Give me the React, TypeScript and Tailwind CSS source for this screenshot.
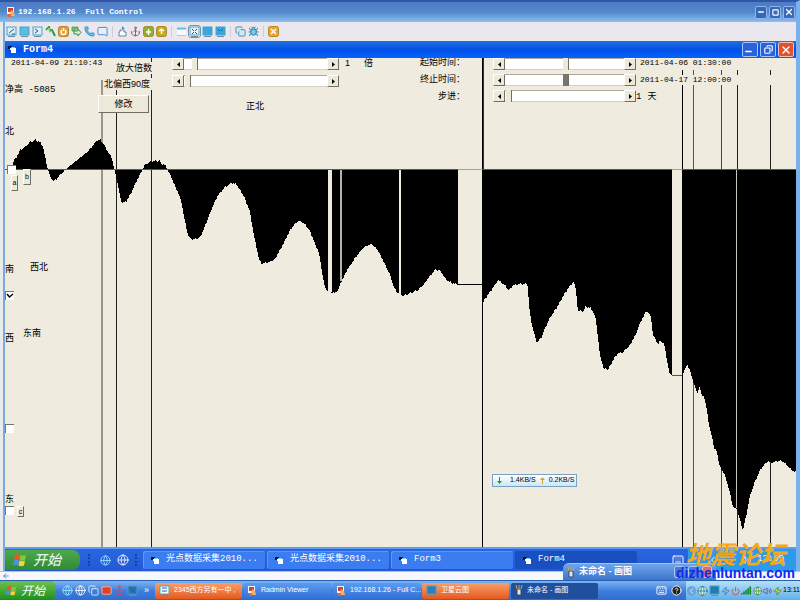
import React from "react";
import {
  Anchor, ArrowLeft, Bug, Copy, Globe, HelpCircle, Keyboard, Mail, MessageSquare, Minus,
  Phone, Power, Signal, Square, Volume2, X, Zap, ChevronLeft,
} from "lucide-react";

const CJK = "font-['Liberation_Sans','Noto_Sans_CJK_SC',sans-serif]";
const MONO = "font-['Liberation_Mono','Noto_Sans_CJK_SC',monospace]";

/* Tilt curve: [x, y] in form units, baseline at y = 169 */
const curve: [number, number][] = [
  [13, 162], [17, 156], [20, 150], [24, 148], [30, 142], [36, 140], [40, 142], [43, 146], [45, 156], [47, 166],
  [50, 176], [53, 181], [56, 180], [60, 175], [66, 169], [72, 164], [85, 154], [92, 147], [97, 140], [101, 140],
  [106, 148], [112, 158], [114, 168], [117, 180], [120, 196], [122, 203], [126, 202], [130, 195], [135, 184],
  [142, 170], [145, 165], [150, 162], [158, 161], [159, 159], [161, 163], [166, 166], [170, 174], [176, 188],
  [181, 200], [184, 216], [188, 235], [191, 239], [196, 239], [200, 237], [204, 228], [210, 213], [217, 197],
  [224, 188], [231, 183], [236, 184], [243, 194], [250, 212], [254, 235], [259, 259], [262, 264], [270, 262],
  [275, 259], [280, 250], [285, 240], [290, 230], [297, 222], [300, 221], [305, 224], [310, 231], [315, 244],
  [319, 252], [322, 272], [325, 288], [329, 292], [335, 293], [338, 290], [341, 282], [347, 270], [355, 258],
  [362, 249], [368, 245], [372, 244], [378, 250], [384, 262], [390, 275], [394, 287], [398, 293], [403, 296],
  [411, 293], [418, 290], [424, 284], [430, 276], [435, 270], [440, 270], [443, 275], [448, 281], [455, 284],
  [482, 284], [483, 302], [490, 292], [498, 280], [505, 285], [509, 290], [513, 285], [520, 284], [527, 284],
  [528, 287], [529, 305], [531, 320], [534, 333], [537, 343], [541, 338], [546, 326], [549, 319], [556, 309],
  [563, 296], [570, 286], [574, 281], [576, 290], [578, 311], [584, 311], [585, 307], [591, 308], [593, 311],
  [596, 320], [598, 337], [600, 355], [604, 369], [608, 369], [612, 362], [617, 354], [623, 352], [630, 345],
  [636, 334], [640, 323], [645, 313], [648, 311], [651, 317], [653, 334], [658, 344], [660, 341], [664, 343],
  [667, 360], [670, 375], [682, 375], [684, 372], [687, 364], [691, 373], [694, 384], [698, 394], [699, 386],
  [702, 395], [704, 396], [707, 410], [709, 425], [713, 440], [714, 448], [717, 451], [719, 464], [725, 475],
  [730, 493], [733, 507], [737, 509], [743, 530], [747, 512], [750, 496], [755, 481], [760, 470], [768, 461],
  [772, 463], [776, 461], [782, 461], [788, 466], [793, 471], [796, 472],
];

/* One sample per unit, with a fine sensor ripple */
function samples() {
  const out: string[] = [];
  for (let i = 1; i < curve.length; i++) {
    const [x0, y0] = curve[i - 1];
    const [x1, y1] = curve[i];
    for (let x = x0; x < x1; x++) {
      const ripple = ((x * 7) % 5) / 2 - 1;
      out.push(x + "," + Math.round(y0 + ((y1 - y0) * (x - x0)) / (x1 - x0) + ripple));
    }
  }
  return "13,169 " + out.join(" ") + " 796,472 796,169";
}

function Chart() {
  return (
    <svg className="absolute inset-0 h-full w-full" viewBox="5 58 791 489" preserveAspectRatio="none" shapeRendering="crispEdges">
      <rect x="101" y="80" width="2" height="467" fill="#99968b" />
      <rect x="116" y="86" width="1" height="461" fill="#222" />
      <rect x="151" y="58" width="1" height="489" fill="#222" />
      <rect x="482" y="58" width="1" height="489" fill="#000" />
      <rect x="483" y="58" width="1" height="111" fill="#333" />
      <rect x="682" y="70" width="1" height="477" fill="#000" />
      <rect x="693" y="70" width="1" height="477" fill="#555" />
      <rect x="721" y="70" width="1" height="477" fill="#444" />
      <rect x="737" y="70" width="1" height="477" fill="#222" />
      <rect x="770" y="70" width="1" height="477" fill="#222" />
      <polygon points={samples()} fill="#000" />
      <g fill="#efebde">
        <rect x="328" y="170" width="4" height="122" />
        <rect x="399" y="170" width="2" height="124" />
        <rect x="458" y="169" width="24" height="115" />
        <rect x="672" y="169" width="10" height="206" />
      </g>
      <rect x="340" y="170" width="2" height="111" fill="#b5b2a8" />
      <rect x="736" y="170" width="1" height="338" fill="#c8c5bb" />
      <rect x="458" y="284" width="24" height="1" fill="#000" />
      <rect x="672" y="375" width="10" height="1" fill="#555" />
      <rect x="5" y="169" width="791" height="1" fill="#a8342a" />
      <rect x="458" y="169" width="24" height="1" fill="#e08a80" />
      <rect x="672" y="169" width="10" height="1" fill="#e08a80" />
    </svg>
  );
}

const raised = "border border-t-white border-l-white border-r-[#716f64] border-b-[#716f64] bg-[#ece9d8]";

function ScrollBar({ label, value, thumb = "light" }: { label: string; value: number; thumb?: "light" | "dark" }) {
  const thumbTone =
    thumb === "dark"
      ? "[&::-webkit-slider-thumb]:bg-[#77756c]"
      : "[&::-webkit-slider-thumb]:bg-[#ece9d8]";
  return (
    <div className="flex h-3 w-full">
      <button aria-label={label + " －"} className={"flex w-3 shrink-0 items-center justify-center " + raised}>
        <svg width="3" height="5" viewBox="0 0 3 5"><path d="M3 0v5L0 2.500z" /></svg>
      </button>
      <input
        type="range"
        aria-label={label}
        defaultValue={value}
        className={
          "h-3 min-w-0 flex-1 appearance-none border-y border-t-[#aca899] border-b-[#d5d2c5] bg-white [&::-webkit-slider-thumb]:h-3 [&::-webkit-slider-thumb]:w-1.5 [&::-webkit-slider-thumb]:appearance-none [&::-webkit-slider-thumb]:border-r [&::-webkit-slider-thumb]:border-[#716f64] " +
          thumbTone
        }
      />
      <button aria-label={label + " ＋"} className={"flex w-3 shrink-0 items-center justify-center " + raised}>
        <svg width="3" height="5" viewBox="0 0 3 5"><path d="M0 0v5l3-2.500z" /></svg>
      </button>
    </div>
  );
}

function FormIcon() {
  return (
    <svg className="shrink-0" width="9" height="9" viewBox="0 0 9 9" shapeRendering="crispEdges">
      <path d="M0 1h4v3H0z" fill="#113" />
      <path d="M2 3h6v5H3V5H2z" fill="#fff" />
      <path d="M3 2h4v1H3z" fill="#7fd3e8" />
    </svg>
  );
}

function Flag({ size }: { size: number }) {
  return (
    <svg width={size} height={size} viewBox="0 0 14 14">
      <path d="M2 2q2-1.500 5 0L6 7Q3 5.500 1 7z" fill="#f0562a" />
      <path d="M7.500 2q3 1.500 5.500 0l-1 5q-3 1.300-5.500 0z" fill="#84c842" />
      <path d="M1 7.500q2-1.500 5 0l-1 5q-2-1.500-5 0z" fill="#4b8ff0" />
      <path d="M6.500 7.500q3 1.500 5.500 0l-1 5q-3 1.300-5.500 0z" fill="#fbd038" />
    </svg>
  );
}

function RadminIcon() {
  return (
    <svg className="shrink-0" width="9" height="10" viewBox="0 0 9 10">
      <path d="M0 0h7v7H0z" fill="#f3f6fb" />
      <path d="M1 1h5v4H1z" fill="#c8452b" />
      <path d="M4 3l3 2 1 4H3z" fill="#f0b070" />
      <path d="M1 7h3v3H1z" fill="#e8632e" />
    </svg>
  );
}

function Monitor({ fill = "#8ed4ee", mark = "" }: { fill?: string; mark?: string }) {
  return (
    <svg className="shrink-0" width="11" height="11" viewBox="0 0 11 11">
      <rect x="1" y="1" width="9" height="8" fill={fill} stroke="#4f9fc0" />
      <path d="M2 10.500h7" stroke="#6c8d9d" />
      <path d={mark} fill="none" stroke="#1d5f9b" />
    </svg>
  );
}

/* Blank pane with a title strip and no frame */
function Pane() {
  return (
    <svg width="11" height="11" viewBox="0 0 11 11">
      <rect x="1" y="1" width="9" height="9" fill="#f7fafc" />
      <path d="M1 2.500h9" stroke="#56bfe0" strokeWidth="2" />
      <path d="M1 9.500h9" stroke="#a9cfe0" />
    </svg>
  );
}

/* Two transfer arrows with a green fill */
function Transfer() {
  return (
    <svg width="11" height="11" viewBox="0 0 11 11">
      <path d="M1 1h6v2H4v2H1z" fill="#7cc46a" stroke="#3d8f4a" strokeWidth="0.700" />
      <path d="M3 5h4V3l3 3.500L7 10V8H3z" fill="#dff2d4" stroke="#3d8f4a" />
    </svg>
  );
}

/* Zigzag arrow that starts at the upper left */
function Link() {
  return (
    <svg width="11" height="11" viewBox="0 0 11 11">
      <path d="M1 4l3-3 1 4 2-1 3 6" fill="none" stroke="#2f9a3e" strokeWidth="2" />
      <path d="M2 4l2-2 1 4 2-1" fill="none" stroke="#a8dc8c" />
    </svg>
  );
}

function Pointer() {
  return (
    <svg width="11" height="11" viewBox="0 0 11 11">
      <path d="M5 0l3 3H5z" fill="#4a86b8" />
      <path d="M3 4h4v2h2v4H2V6h1z" fill="#fff" stroke="#5f86a6" />
    </svg>
  );
}

function Badge({ color, mark }: { color: string; mark: string }) {
  return (
    <svg width="11" height="11" viewBox="0 0 11 11">
      <rect x="0.500" y="0.500" width="10" height="10" rx="2" fill={color} stroke="#a98a2c" />
      <path d={mark} fill="none" stroke="#fff" strokeWidth="1.500" />
    </svg>
  );
}

const toolGroups: [string, React.ReactNode][][] = [
  [
    ["连接", <Monitor fill="#d6eef6" mark="M3 7l5-4M6 8h3" />],
    ["完全控制", <Monitor fill="#55bfe5" />],
    ["仅查看", <Monitor fill="#e0eefa" mark="M3 3l3 2-3 2" />],
    ["远程登录", <Link />],
    ["关机", <Badge color="#f09a2c" mark="M4 4a2.500 2.500 0 1 0 3 0M5.500 2v3" />],
    ["文件传输", <Transfer />],
    ["语音", <Phone size={11} color="#2d8fc0" fill="#62c3e6" />],
    ["聊天", <MessageSquare size={11} color="#4f7fc4" fill="#e4effa" className="-scale-x-100" />],
  ],
  [
    ["发送消息", <Pointer />],
    ["锚定", <Anchor size={11} color="#8a5a62" />],
    ["发送剪贴板", <Badge color="#8fae34" mark="M3 6h5M5.500 3v6" />],
    ["获取剪贴板", <Badge color="#c8a81c" mark="M5.500 8V3M3 5l2.500-2L8 5" />],
  ],
  [
    ["普通视图", <Pane />],
    ["伸缩视图", <Monitor fill="#e6f5fb" mark="M3 3l2 2M8 3L6 5M3 8l2-2M8 8L6 6" />],
    ["全屏", <Monitor fill="#36a7e0" />],
    ["全屏伸缩", <Monitor fill="#36a7e0" mark="M3 3l2 2M8 3L6 5" />],
  ],
  [
    ["复制", <Copy size={11} color="#4f86a8" fill="#cfe8f2" />],
    ["选项", <Bug size={11} color="#2f7fae" fill="#77cbe0" />],
  ],
  [["断开", <Badge color="#f0a42a" mark="M3 3l5 5M8 3L3 8" />]],
];

const winButton = "flex items-center justify-center rounded-[2px] border text-white";
const fieldText = "bg-[#efebde] text-[9px] leading-3 whitespace-nowrap text-black";

function FormHeader() {
  return (
    <header className="relative flex items-start">
      <div className="w-[93px] shrink-0 pl-1.5">
        <p className={MONO + " text-[8px] leading-[10px] whitespace-nowrap"}>2011-04-09 21:10:43</p>
        <p className={MONO + " mt-4 -ml-1.5 text-[9px] leading-3 whitespace-nowrap"}>净高 -5085</p>
      </div>
      <div className="w-[74px] shrink-0 pt-1">
        <p className={"ml-[18px] w-[38px] " + fieldText}>放大倍数</p>
        <p className={"mt-1 ml-1.5 w-[50px] " + fieldText}>北偏西90度</p>
        <button className={"mt-1 h-[18px] w-[51px] text-[9px] leading-3 " + raised}>修改</button>
      </div>
      <div className="flex w-[167px] shrink-0 flex-col gap-[5px]">
        <ScrollBar label="放大倍数" value={6} />
        <ScrollBar label="方位角" value={1} />
        <p className="mt-2 pl-[74px] text-[9px] leading-3">正北</p>
      </div>
      <div className="flex w-[61px] shrink-0 gap-3.5 pl-1.5 text-[9px] leading-[10px]">
        <span>1</span>
        <span>倍</span>
      </div>
      <div className="flex w-[93px] shrink-0 flex-col items-end gap-1 pr-7 text-[9px] leading-[13px] whitespace-nowrap">
        <span className="-mt-0.5">起始时间：</span>
        <span>终止时间：</span>
        <span>步进：</span>
      </div>
      <div className="flex w-[143px] shrink-0 flex-col gap-1">
        <ScrollBar label="起始时间" value={51} />
        <ScrollBar label="终止时间" value={51} thumb="dark" />
        <ScrollBar label="步进" value={1} />
      </div>
      <div className={MONO + " flex flex-col gap-[7px] pl-1 text-[8px] leading-[10px]"}>
        <p className="w-[140px] bg-[#efebde]">2011-04-06 01:30:00</p>
        <p className="w-[140px] bg-[#efebde]">2011-04-17 12:00:00</p>
        <p className="-ml-1 flex gap-1.5 text-[9px]"><span>1</span><span>天</span></p>
      </div>
    </header>
  );
}

function Mark({ at, children }: { at: string; children: string }) {
  return <span className={"absolute text-[9px] leading-3 " + at}>{children}</span>;
}

function Tick({ at, label, on = false }: { at: string; label: string; on?: boolean }) {
  return (
    <label className={"absolute block h-[9px] w-[9px] " + at}>
      <input
        type="checkbox"
        aria-label={label}
        defaultChecked={on}
        className="peer block h-[9px] w-[9px] appearance-none border-t border-l border-[#77756c] bg-white"
      />
      <svg className="absolute inset-0 hidden peer-checked:block" viewBox="0 0 9 9">
        <path d="M2 3l2.500 3L8 3" fill="none" stroke="#000" strokeWidth="1.500" />
      </svg>
    </label>
  );
}

function InnerTask({ text, active = false }: { text: string; active?: boolean }) {
  return (
    <button
      className={
        "flex h-[18px] w-[122px] min-w-0 items-center gap-1.5 rounded-[2px] pl-2 text-[9px] whitespace-nowrap text-white " +
        MONO +
        (active ? " bg-[#1a4fc0]" : " bg-[#3b7cf0] shadow-[inset_1px_1px_0_#5a98fb]")
      }
    >
      <FormIcon />
      {text}
    </button>
  );
}

function OuterTask({ text, tone, icon }: { text: string; tone: string; icon: React.ReactNode }) {
  return (
    <button className={"flex h-4 w-[87px] min-w-0 items-center gap-1 rounded-[2px] pl-1 text-[7px] whitespace-nowrap text-white " + tone}>
      {icon}
      {text}
    </button>
  );
}

function PaintIcon() {
  return (
    <svg className="shrink-0" width="8" height="11" viewBox="0 0 8 11">
      <path d="M2 4h4v6H2z" fill="#dfe9f5" stroke="#445" />
      <path d="M2 4L1 0M4 4V0M6 4l1-4" stroke="#e2a63a" />
    </svg>
  );
}

export default function App() {
  return (
    <main className={"relative flex h-screen min-h-[500px] flex-col overflow-hidden bg-[#f4f6fa] text-black " + CJK}>
      <section className="flex min-h-0 flex-1 flex-col border-t-2 border-r-4 border-t-[#2d56a8] border-r-[#79b0ee] bg-[#efebde]">
        <div className="flex h-5 shrink-0 items-center bg-linear-to-b from-[#4f7ac4] via-[#5288cc] to-[#8cc0ee] pr-px pl-[7px]">
          <RadminIcon />
          <h1 className={MONO + " ml-0.5 flex-1 text-[8px] font-bold whitespace-pre text-white"}>192.168.1.26  Full Control</h1>
          <div className="flex gap-0.5">
            <button aria-label="最小化" className={winButton + " h-[13px] w-3 border-[#8fb6ea] bg-[#3767b8]"}><Minus size={8} strokeWidth={4} /></button>
            <button aria-label="最大化" className={winButton + " h-[13px] w-3 border-[#8fb6ea] bg-[#3767b8]"}><Square size={7} strokeWidth={4} /></button>
            <button aria-label="关闭" className={winButton + " h-[13px] w-3 border-[#8fb6ea] bg-[#3767b8]"}><X size={10} strokeWidth={3} /></button>
          </div>
        </div>
        <div className="flex min-h-0 flex-1 border-l-[3px] border-[#e8eaec]">
          <div className="w-0.5 shrink-0 bg-[#7aa9da]" />
          <div className="flex min-w-0 flex-1 flex-col">
            <nav className="flex h-[19px] shrink-0 items-center gap-1 bg-[#eae8ee] pl-px">
              {toolGroups.map((group, g) => (
                <div key={g} className={"flex gap-0.5 " + (g > 0 ? "border-l border-[#cfcdd6] pl-1" : "")}>
                  {group.map(([name, icon]) => (
                    <button
                      key={name}
                      aria-label={name}
                      className={name === "伸缩视图" ? "rounded-[2px] bg-white outline outline-[#7c8fa8]" : ""}
                    >
                      {icon}
                    </button>
                  ))}
                </div>
              ))}
            </nav>
            <div className="flex h-[17px] shrink-0 items-center bg-linear-to-b from-[#2270dd] via-[#0450e6] to-[#0363ff] pr-0.5 pl-[3px]">
              <FormIcon />
              <h2 className={MONO + " ml-1.5 flex-1 text-[10px] leading-3 font-bold text-white"}>Form4</h2>
              <div className="flex gap-0.5">
                <button aria-label="最小化窗体" className={winButton + " h-[15px] w-4 border-[#a9c4f6] bg-[#2b62dc]"}><Minus size={9} strokeWidth={4} className="mt-1 -ml-1" /></button>
                <button aria-label="还原窗体" className={winButton + " h-[15px] w-4 border-[#a9c4f6] bg-[#2b62dc]"}><Copy size={9} strokeWidth={3} className="-scale-x-100" /></button>
                <button aria-label="关闭窗体" className={winButton + " h-[15px] w-4 border-[#f2c0b4] bg-[#e0512f]"}><X size={12} strokeWidth={3} /></button>
              </div>
            </div>

            <div className="relative min-h-0 flex-1 overflow-hidden bg-[#efebde]">
              <Chart />
              <FormHeader />
              <Mark at="top-[67px] left-0">北</Mark>
              <Mark at="top-[205px] left-0">南</Mark>
              <Mark at="top-[203px] left-[25px]">西北</Mark>
              <Mark at="top-[274px] left-0">西</Mark>
              <Mark at="top-[269px] left-[18px]">东南</Mark>
              <Mark at="top-[435px] left-0">东</Mark>
              <Tick at="top-[107px] left-0.5" label="北" />
              <Tick at="top-[233px] left-0" label="南" on />
              <Tick at="top-[366px] left-0" label="西" />
              <Tick at="top-[448px] left-0" label="东" />
              <button className={"absolute top-[117px] left-1.5 h-4 w-[7px] text-[7px] leading-3 " + raised}>a</button>
              <button className={"absolute top-[111px] left-[18px] h-4 w-2 text-[7px] leading-3 " + raised}>b</button>
              <button className={"absolute top-[448px] left-3 h-[11px] w-[7px] text-[7px] leading-[9px] " + raised}>c</button>
              <div className="absolute top-[416px] left-[487px] flex h-[13px] w-[85px] items-center gap-1 border border-[#7f9fc0] bg-linear-to-b from-white to-[#c9e8f6] pl-1 text-[7px] whitespace-nowrap">
                <svg width="5" height="7" viewBox="0 0 5 7"><path d="M2 0h1v4h2L2.500 7 0 4h2z" fill="#1c9a3c" /></svg>
                <span className="pl-1">1.4KB/S</span>
                <svg width="5" height="7" viewBox="0 0 5 7"><path d="M2 7h1V3h2L2.500 0 0 3h2z" fill="#e0a020" /></svg>
                <span>0.2KB/S</span>
              </div>
            </div>

            <footer className="flex h-6 shrink-0 items-center border-t-2 border-[#5a9bf5] bg-linear-to-b from-[#2a66e0] to-[#2358d6]">
              <button className="flex h-5 w-[75px] shrink-0 items-center gap-1.5 rounded-r-lg bg-linear-to-b from-[#4fa84c] to-[#2f8a35] pl-2 text-[14px] text-white italic">
                <Flag size={14} />开始
              </button>
              <div className="flex w-[63px] shrink-0 items-center gap-1.5 pl-2">
                <span className="h-3 border-l-2 border-dotted border-[#14419f]" />
                <Globe size={11} color="#8fe0f8" className="ml-1" />
                <Globe size={12} color="#dfe9f2" />
                <span className="h-3 border-l-2 border-dotted border-[#14419f]" />
              </div>
              <div className="flex min-w-0 flex-1 gap-0.5">
                <InnerTask text="光点数据采集2010..." />
                <InnerTask text="光点数据采集2010..." />
                <InnerTask text="Form3" />
                <InnerTask text="Form4" active />
              </div>
              <Keyboard size={12} color="#fff" className="mr-1" />
              <div className="flex h-full w-[108px] shrink-0 items-center justify-end gap-1.5 bg-[#2e9bea] pr-3 text-white">
                <ChevronLeft size={12} />
                <Power size={10} color="#902838" />
                <Volume2 size={10} />
                <span className={MONO + " text-[9px]"}>12:09</span>
              </div>
            </footer>
          </div>
        </div>
      </section>

      <div className="flex h-[9px] shrink-0 items-center border-t border-[#9cc8f4] bg-[#f6f8fc] pl-0.5">
        <ArrowLeft size={8} color="#2b5f98" />
      </div>

      <footer className="flex h-5 shrink-0 items-center border-t border-[#285fb0] bg-linear-to-b from-[#7db4f2] via-[#3f80dc] to-[#2f6cd0]">
        <button className="flex h-full w-14 shrink-0 items-center gap-1 rounded-r-md bg-linear-to-b from-[#6cc050] to-[#15901c] pl-1.5 text-[12px] text-white italic">
          <Flag size={11} />开始
        </button>
        <div className="flex w-[99px] shrink-0 items-center gap-0.5 pl-1.5 text-[9px] text-white">
          <Globe size={11} color="#8fe4ff" />
          <Globe size={11} color="#eef6ff" />
          <Copy size={11} color="#d9ecff" />
          <Mail size={11} color="#ffb096" fill="#d8432a" />
          <Anchor size={11} color="#e8424c" />
          <Monitor fill="#2870b8" mark="M3 3l5 5" />
          <span className="pl-1">»</span>
        </div>
        <div className="flex min-w-0 flex-1 gap-0.5">
          <OuterTask text="2345西方另有一中 ," tone="bg-linear-to-b from-[#f7a06a] to-[#e4571a]" icon={<Monitor fill="#fff" mark="M3 3h5M3 6h5" />} />
          <OuterTask text="Radmin Viewer" tone="bg-linear-to-b from-[#5b9cf0] to-[#316fd6]" icon={<RadminIcon />} />
          <OuterTask text="192.168.1.26 - Full C..." tone="bg-linear-to-b from-[#5b9cf0] to-[#316fd6]" icon={<RadminIcon />} />
          <OuterTask text="卫星云图" tone="bg-linear-to-b from-[#f7a06a] to-[#e4571a]" icon={<Monitor fill="#2a7fc0" />} />
          <OuterTask text="未命名 - 画图" tone="bg-[#204f9e]" icon={<PaintIcon />} />
        </div>
        <div className="flex h-full shrink-0 items-center gap-1 pr-1">
          <Keyboard size={11} color="#fff" />
          <HelpCircle size={11} color="#fff" fill="#222" />
        </div>
        <div className="flex h-full w-[114px] shrink-0 items-center gap-px bg-linear-to-b from-[#b4e0f8] to-[#5fb0ea] pl-px text-[7px]">
          <ChevronLeft size={10} color="#fff" className="rounded-full bg-[#6aa4e0]" />
          <Globe size={12} color="#2a7fae" fill="#dff0d0" />
          <Monitor fill="#247ab0" />
          <Zap size={10} color="#3a6f9a" />
          <Power size={10} color="#d03a30" />
          <Signal size={11} color="#178a2c" strokeWidth={4} />
          <Globe size={10} color="#3d8a44" fill="#e4f4d8" />
          <Volume2 size={10} color="#6c3a80" />
          <Zap size={10} color="#3a8020" fill="#d8e040" />
          <span className="text-black">13:11</span>
        </div>
      </footer>

      {/* Paint window title, floating above both task bars */}
      <div className="absolute bottom-5 left-[563px] flex h-[17px] w-[153px] items-center gap-1 rounded-t-md border-t border-[#9cc4f4] bg-linear-to-b from-[#6fa4ea] to-[#3c76cc] pl-1 text-[9px] font-bold text-white">
        <PaintIcon />
        <span className="flex-1">未命名 - 画图</span>
        <span className="h-3 w-2.5 rounded-[2px] border border-[#a9c8f2] bg-[#4a78cc]" />
        <span className="h-3 w-2.5 rounded-[2px] border border-[#a9c8f2] bg-[#4a78cc]" />
        <span className="mr-1 h-3 w-2.5 rounded-[2px] border border-[#f0b8a8] bg-[#d07070]" />
      </div>
      <div className="absolute right-1.5 bottom-5 flex w-[117px] flex-col items-center whitespace-nowrap">
        <span className="font-['Noto_Sans_CJK_SC',sans-serif] text-[25px] leading-[26px] font-bold text-[#f4a81c] italic">地震论坛</span>
        <span className="text-[14px] leading-[14px] font-bold text-[#1428f0]">dizhenluntan.com</span>
      </div>
    </main>
  );
}
